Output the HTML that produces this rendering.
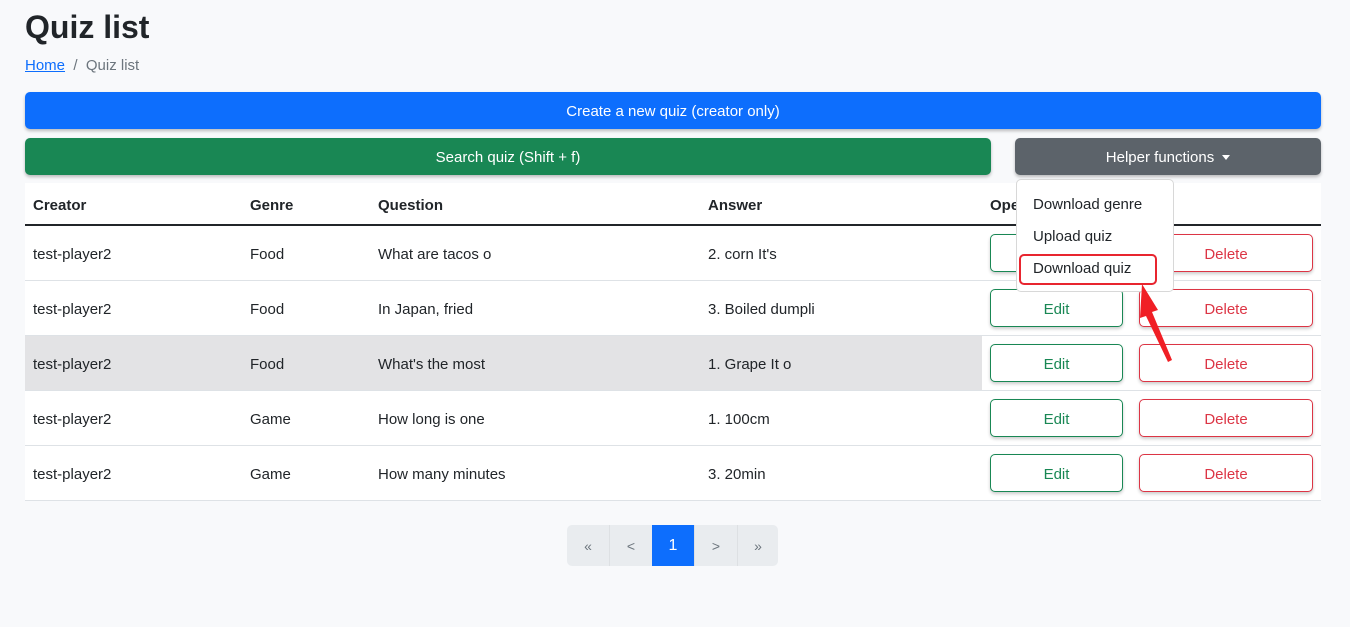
<!DOCTYPE html><html><head><style>
body{margin:0;background:#f8f9fb;font-family:"Liberation Sans",sans-serif;color:#212529;width:1350px;height:627px;position:relative;overflow:hidden}
.a{position:absolute}
h1{position:absolute;left:25px;top:9px;margin:0;font-size:32px;font-weight:bold}
.btn{position:absolute;border-radius:5px;color:#fff;font-size:15px;display:flex;align-items:center;justify-content:center;box-shadow:0 2px 3px rgba(0,0,0,.25);padding-top:2px;box-sizing:border-box}
.row{position:absolute;left:25px;width:1296px;height:54px;border-bottom:1px solid #dee2e6;background:#fff;font-size:15px}
.row span{position:absolute;top:20px}
.ed,.de{position:absolute;top:8px;height:36px;border-radius:5px;display:flex;align-items:center;justify-content:center;font-size:15px;background:#fff;box-shadow:0 2px 3px rgba(0,0,0,.2);padding-top:2px;box-sizing:border-box;height:38px}
.ed{left:965px;width:133px;border:1px solid #198754;color:#198754}
.de{left:1114px;width:174px;border:1px solid #dc3545;color:#dc3545}
.pg{position:absolute;top:525px;height:41px;width:42px;background:#e9ecef;color:#6c757d;font-size:14px;display:flex;align-items:center;justify-content:center;border-right:1px solid #dde0e3}
</style></head><body>
<h1>Quiz list</h1>
<div class="a" style="left:25px;top:57px;font-size:15px"><span style="color:#0d6efd;text-decoration:underline">Home</span> <span style="color:#6c757d">&nbsp;/&nbsp; Quiz list</span></div>
<div class="btn" style="left:25px;top:92px;width:1296px;height:37px;background:#0d6efd">Create a new quiz (creator only)</div>
<div class="btn" style="left:25px;top:138px;width:966px;height:37px;background:#198754">Search quiz (Shift + f)</div>
<div class="btn" style="left:1015px;top:138px;width:306px;height:37px;background:#5c636a">Helper functions <span style="display:inline-block;margin-left:8px;border-left:4px solid transparent;border-right:4px solid transparent;border-top:5px solid #fff"></span></div>
<div class="a" style="left:25px;top:183px;width:1296px;height:41px;border-bottom:2px solid #212529;background:#fff;font-size:15px;font-weight:bold">
<span class="a" style="left:8px;top:14px">Creator</span><span class="a" style="left:225px;top:14px">Genre</span><span class="a" style="left:353px;top:14px">Question</span><span class="a" style="left:683px;top:14px">Answer</span><span class="a" style="left:965px;top:14px">Operation</span></div>
<div class="row" style="top:226px"><span style="left:8px">test-player2</span><span style="left:225px">Food</span><span style="left:353px">What are tacos o</span><span style="left:683px">2. corn It's</span><div class="ed">Edit</div><div class="de">Delete</div></div>
<div class="row" style="top:281px"><span style="left:8px">test-player2</span><span style="left:225px">Food</span><span style="left:353px">In Japan, fried</span><span style="left:683px">3. Boiled dumpli</span><div class="ed">Edit</div><div class="de">Delete</div></div>
<div class="row" style="top:336px;background:linear-gradient(90deg,#e3e3e5 957px,#fff 957px)"><span style="left:8px">test-player2</span><span style="left:225px">Food</span><span style="left:353px">What's the most</span><span style="left:683px">1. Grape It o</span><div class="ed">Edit</div><div class="de">Delete</div></div>
<div class="row" style="top:391px"><span style="left:8px">test-player2</span><span style="left:225px">Game</span><span style="left:353px">How long is one</span><span style="left:683px">1. 100cm</span><div class="ed">Edit</div><div class="de">Delete</div></div>
<div class="row" style="top:446px"><span style="left:8px">test-player2</span><span style="left:225px">Game</span><span style="left:353px">How many minutes</span><span style="left:683px">3. 20min</span><div class="ed">Edit</div><div class="de">Delete</div></div>
<div class="a" style="left:1016px;top:179px;width:156px;height:111px;background:#fff;border:1px solid #d8d8d8;border-radius:5px;font-size:15px">
<span class="a" style="left:16px;top:16px">Download genre</span><span class="a" style="left:16px;top:48px">Upload quiz</span><span class="a" style="left:16px;top:80px">Download quiz</span>
<div class="a" style="left:2px;top:74px;width:134px;height:27px;border:2px solid #e8252f;border-radius:5px"></div></div>
<svg class="a" style="left:1130px;top:280px" width="50" height="90"><polygon points="12,4 28,30 22,32 42,80 38,82 16,36 10,38" fill="#f01f25"/></svg>
<div class="pg" style="left:567px;border-radius:5px 0 0 5px">«</div>
<div class="pg" style="left:610px">&lt;</div>
<div class="pg" style="left:652px;background:#0d6efd;color:#fff;font-size:16px">1</div>
<div class="pg" style="left:695px">&gt;</div>
<div class="pg" style="left:738px;border-radius:0 5px 5px 0;width:40px;border:0">»</div>
</body></html>
